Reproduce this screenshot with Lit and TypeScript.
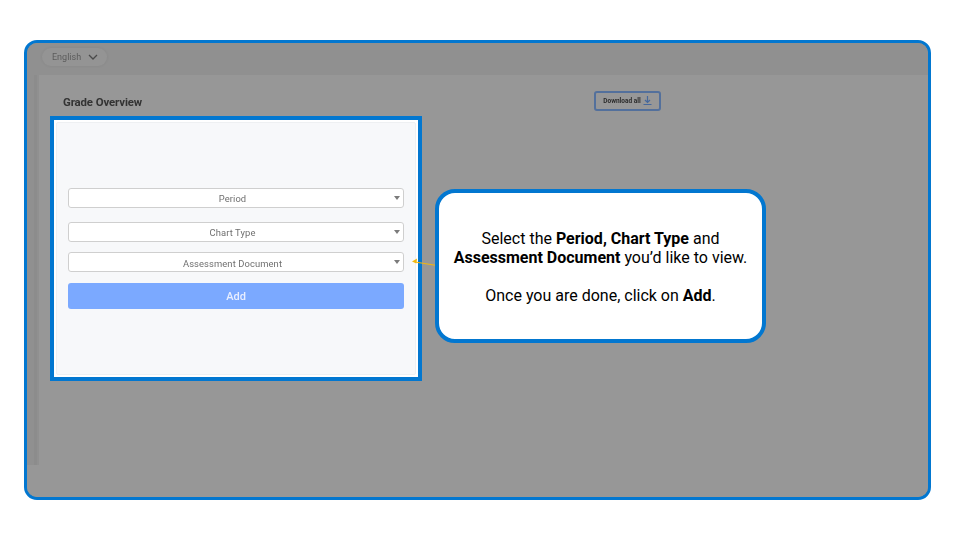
import { LitElement, html, css } from "lit";
import { customElement } from "lit/decorators.js";

@customElement("app-root")
export class AppRoot extends LitElement {
  static styles = css`
    :host { display: block; width: 960px; height: 540px; background: #fff; font-family: Roboto, "Liberation Sans", sans-serif; overflow: hidden; }
    .page { padding: 40px 29px 40px 24px; box-sizing: border-box; width: 960px; height: 540px; position: relative; }
    .frame { box-sizing: border-box; height: 460px; border: 3px solid #0277d0; border-radius: 13px; background: #959595; overflow: hidden; display: flex; flex-direction: column; }
    .top { height: 32px; flex: none; background: #909090; padding: 5px 0 0 15px; box-sizing: border-box; display: flex; align-items: flex-start; }
    .lang { display: flex; align-items: center; gap: 7px; height: 18px; padding: 0 9px 0 10px; border-radius: 9px; background: #949494; box-shadow: 0 0 3px rgba(0,0,0,.08); color: #5c5c5c; font-size: 9px; filter: blur(.35px); }
    .lang svg { display: block; }
    .content { flex: 1; display: flex; min-height: 0; background: #979797; }
    .rail { width: 12px; flex: none; background: #909090; height: 390px; }
    .rail-strip { width: 3px; height: 390px; background: #8c8c8c; margin-left: 7px; }
    .main { flex: 1; padding: 16px 0 0 24px; min-width: 0; }
    .head { display: flex; align-items: center; width: 598px; justify-content: space-between; height: 22px; filter: blur(.4px); }
    .title { font-size: 11.4px; font-weight: 700; color: #333; letter-spacing: -.1px; }
    .dl { display: flex; align-items: center; gap: 2px; box-sizing: border-box; width: 67px; height: 20px; justify-content: center; border: 2px solid #53709c; border-radius: 3px; color: #2c2c2c; font-size: 6.5px; font-weight: 700; margin-top: -3px; }

    .hl { position: absolute; left: 50px; top: 116px; width: 372px; height: 265px; box-sizing: border-box; border: 4px solid #0277d0; background: #fff; padding: 2px; }
    .card { box-sizing: border-box; height: 100%; background: #f7f8fa; border-radius: 2px; border: 1px solid #eef0f2; padding: 65px 11px 0 11px; display: flex; flex-direction: column; }
    .sel { box-sizing: border-box; height: 20px; flex: none; background: #fff; border: 1px solid #cfcfcf; border-radius: 3px; display: flex; align-items: center; color: #6f6f6f; font-size: 9.4px; letter-spacing: .1px; filter: blur(.3px); }
    .sel span { flex: 1; text-align: center; padding-left: 2px; }
    .sel i { width: 0; height: 0; border-left: 3.5px solid transparent; border-right: 3.5px solid transparent; border-top: 4px solid #7b7b7b; margin-right: 3px; }
    .s2 { margin-top: 14px; }
    .s3 { margin-top: 10px; }
    .s3 span { padding-top: 2px; }
    .add { margin-top: 11px; height: 26px; flex: none; border-radius: 3px; background: #7ba9ff; color: #e8eeff; font-size: 11px; font-weight: 500; display: flex; align-items: center; justify-content: center; filter: blur(.3px); }

    .call { position: absolute; left: 435px; top: 189px; width: 331px; height: 154px; box-sizing: border-box; border: 4px solid #0277d0; border-radius: 20px; background: #fff; color: #000; font-size: 16px; line-height: 19px; display: flex; flex-direction: column; align-items: center; justify-content: center; text-align: center; padding-top: 2px; }
    .call p { margin: 0; }
    .call p + p { margin-top: 19px; }
    .call b { font-weight: 700; }
    .arrow { position: absolute; left: 408px; top: 255px; display: block; }
  `;

  render() {
    return html`<div class="page">
      <div class="frame">
        <div class="top">
          <div class="lang">English
            <svg width="10" height="6" viewBox="0 0 10 6"><path d="M1 1l4 4 4-4" fill="none" stroke="#4a4a4a" stroke-width="1.3"/></svg>
          </div>
        </div>
        <div class="content">
          <div class="rail"><div class="rail-strip"></div></div>
          <div class="main">
            <div class="head">
              <div class="title">Grade Overview</div>
              <div class="dl">Download all
                <svg width="9" height="10" viewBox="0 0 9 10"><path d="M4.5 0v6M2 4l2.5 2.5L7 4M0.5 8.5h8" fill="none" stroke="#46689c" stroke-width="1.2"/></svg>
              </div>
            </div>
          </div>
        </div>
      </div>
      <div class="hl">
        <div class="card">
          <div class="sel"><span>Period</span><i></i></div>
          <div class="sel s2"><span>Chart Type</span><i></i></div>
          <div class="sel s3"><span>Assessment Document</span><i></i></div>
          <div class="add">Add</div>
        </div>
      </div>
      <svg class="arrow" width="32" height="14" viewBox="0 0 32 14">
        <path d="M29 10.5L7 7" stroke="#f1b70e" stroke-width="1.2" fill="none"/>
        <path d="M4 6.5l5-3-.6 5z" fill="#f1b70e"/>
      </svg>
      <div class="call">
        <p>Select the <b>Period, Chart Type</b> and<br><b>Assessment Document</b> you’d like to view.</p>
        <p>Once you are done, click on <b>Add</b>.</p>
      </div>
    </div>`;
  }
}
